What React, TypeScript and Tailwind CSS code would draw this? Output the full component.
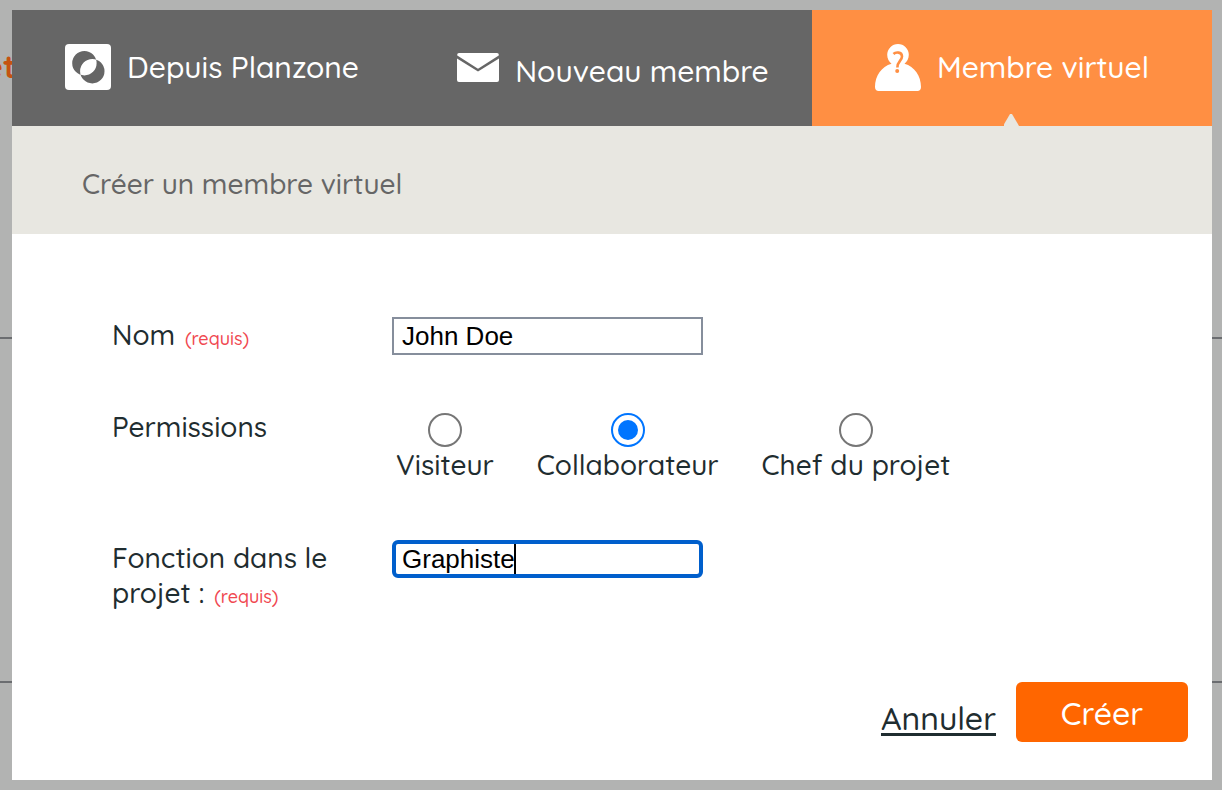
import { FC, ReactNode, useState } from 'react';

import clsx from 'clsx';

const PlanzoneIcon: FC = () => (
  <svg className="h-[46px] w-[46px] shrink-0" viewBox="0 0 46 46" aria-hidden>
    <rect width="46" height="46" rx="4" fill="#fff" />
    <path
      fillRule="evenodd"
      fill="#666"
      d="M19.400 7a12.200 12.200 0 1 1 0 24.400a12.200 12.200 0 0 1 0-24.400ZM27.300 15a12.200 12.200 0 1 1 0 24.400a12.200 12.200 0 0 1 0-24.400Z"
    />
  </svg>
);

const MailIcon: FC = () => (
  <svg className="h-[46px] w-[42px] shrink-0" viewBox="0 0 42 46" aria-hidden>
    <path fill="#fff" d="M2 5h38a2 2 0 0 1 1.700 2.500L21 20.800.3 7.500A2 2 0 0 1 2 5Z" />
    <path
      fill="#fff"
      d="M0 10.500 21 23.500l21-13V32a2 2 0 0 1-2 2H2a2 2 0 0 1-2-2Z"
    />
  </svg>
);

const VirtualIcon: FC = () => (
  <svg className="h-12 w-[46px] shrink-0" viewBox="0 0 46 48" aria-hidden>
    <path
      fill="#fff"
      d="M23 1a10.800 10.800 0 0 1 10.800 10.800c0 4-1.800 6.700-4.300 9C39.500 23.500 46 33 46 44c0 2.500-1.500 4-3.500 4h-39C1.500 48 0 46.500 0 44c0-11 6.500-20.500 16.500-23.200-2.500-2.300-4.300-5-4.300-9A10.800 10.800 0 0 1 23 1Z"
    />
    <path
      fill="none"
      stroke="#ff8f43"
      strokeWidth="2.600"
      d="M18.500 11C20.500 9 27 8.500 27 13.500c0 4-4.600 4.500-4.600 11"
    />
    <circle cx="22.200" cy="28" r="2" fill="#ff8f43" />
  </svg>
);

interface TabProps {
  active?: boolean;
  className?: string;
  icon: ReactNode;
  children: ReactNode;
}

const Tab: FC<TabProps> = ({ active = false, className = '', icon, children }) => (
  <button
    type="button"
    role="tab"
    aria-selected={active}
    className={clsx(
      className,
      'relative flex items-center justify-center pb-0.5 text-[30px] leading-10 font-medium whitespace-nowrap text-white',
      active ? 'bg-[#ff8f43]' : 'bg-[#666]'
    )}
  >
    {icon}
    {children}
    {active ? (
      <svg
        className="absolute bottom-0 left-1/2 h-3 w-4 -translate-x-1/2"
        viewBox="0 0 16 12"
        aria-hidden
      >
        <path fill="#e8e7e1" d="M-1 12 6 0h2l7 12Z" />
      </svg>
    ) : null}
  </button>
);

const Required: FC = () => (
  <span className="ml-0.5 text-lg leading-none text-[#f04850]">(requis)</span>
);

const roles = ['Visiteur', 'Collaborateur', 'Chef du projet'];

const Backdrop: FC = () => (
  <div className="col-start-1 row-start-1 bg-[#b2b3b2]" aria-hidden>
    <div className="flex h-[337px] w-4 justify-end overflow-hidden pt-[46px] text-[32px] leading-10 font-bold text-[#c65310]">
      et
    </div>
    <div className="h-[346px] border-y-2 border-[#6b6d70]" />
  </div>
);

export const App: FC = () => {
  const [role, setRole] = useState('Collaborateur');
  const [name, setName] = useState('John Doe');
  const [job, setJob] = useState('Graphiste');

  return (
    <div className="grid min-h-screen grid-cols-1 font-['Quicksand','Lato',sans-serif] font-medium">
      <Backdrop />
      <div
        role="dialog"
        aria-label="Créer un membre virtuel"
        className="col-start-1 row-start-1 my-2.5 mr-2.5 ml-3 bg-white text-[#1f2d30]"
      >
        <div role="tablist" className="grid h-[116px] grid-cols-3">
          <Tab icon={<PlanzoneIcon />} className="gap-4">
            Depuis Planzone
          </Tab>
          <Tab icon={<MailIcon />} className="gap-4 pt-2 pl-0.5">
            Nouveau membre
          </Tab>
          <Tab icon={<VirtualIcon />} className="gap-4" active>
            Membre virtuel
          </Tab>
        </div>
        <h1 className="flex h-[108px] items-center bg-[#e8e7e1] px-[70px] pt-2 text-[28px] leading-9 font-medium text-[#666]">
          Créer un membre virtuel
        </h1>
        <form
          className="px-6 pt-[83px] pb-[38px] text-[28px] leading-[35px]"
          onSubmit={(e) => e.preventDefault()}
        >
          <div className="grid grid-cols-[240px_1fr] items-start gap-x-10 gap-y-[54px] pl-[76px]">
            <label htmlFor="name">
              Nom <Required />
            </label>
            <input
              id="name"
              className="h-[38px] w-[311px] border-2 border-[#868e9c] px-2 font-['Liberation_Sans',sans-serif] text-[26px] leading-8 font-normal text-black"
              value={name}
              onChange={(e) => setName(e.target.value)}
            />

            <span id="permissions">Permissions</span>
            <div
              role="radiogroup"
              aria-labelledby="permissions"
              className="flex gap-[43px] py-1 pl-1"
            >
              {roles.map((item) => (
                <label
                  key={item}
                  className="flex flex-col items-center whitespace-nowrap"
                >
                  <input
                    type="radio"
                    name="role"
                    className="grid h-[34px] w-[34px] appearance-none place-content-center rounded-full border-2 border-[#767676] before:h-5 before:w-5 before:rounded-full checked:border-[#0075ff] checked:before:bg-[#0075ff]"
                    checked={role === item}
                    onChange={() => setRole(item)}
                  />
                  {item}
                </label>
              ))}
            </div>

            <label htmlFor="job">
              Fonction dans le projet : <Required />
            </label>
            <div className="relative flex">
              <input
                id="job"
                className="h-[38px] w-[311px] rounded-md border-4 border-[#005fcc] px-1.5 font-['Liberation_Sans',sans-serif] text-[26px] leading-8 font-normal text-black outline-none"
                value={job}
                onChange={(e) => setJob(e.target.value)}
              />
              <span className="absolute top-1 left-[122px] h-[30px] w-0.5 bg-black" />
            </div>
          </div>
          <div className="mt-[72px] flex items-center justify-end gap-5 text-[32px] leading-10">
            <a href="#" className="pt-3 underline decoration-[3px] underline-offset-3">
              Annuler
            </a>
            <button
              type="submit"
              className="h-[60px] w-[172px] rounded-md bg-[#ff6600] pt-0.5 text-white"
            >
              Créer
            </button>
          </div>
        </form>
      </div>
    </div>
  );
};

export default App;
